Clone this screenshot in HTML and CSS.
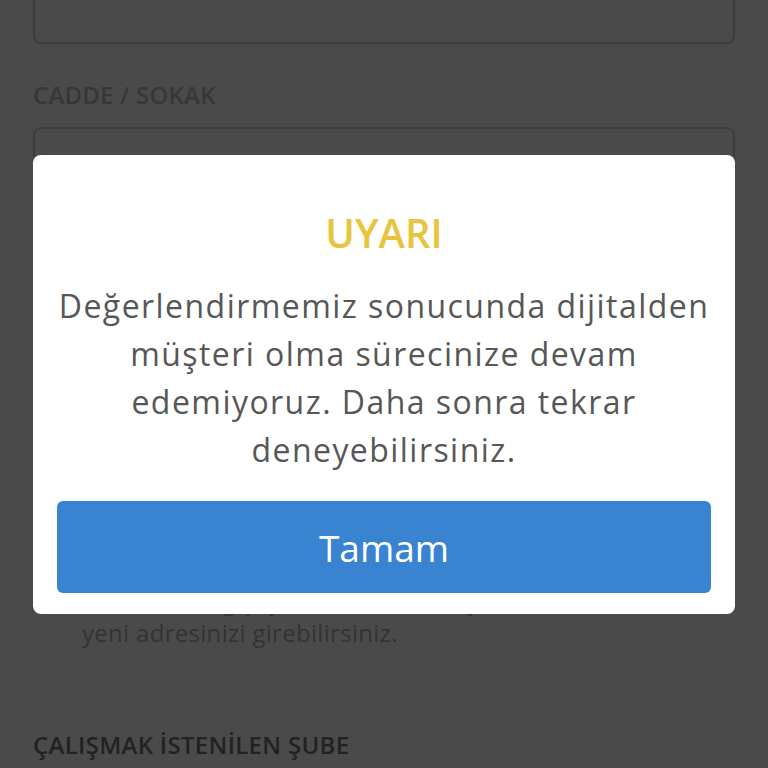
FILE: index.html
```html
<!DOCTYPE html>
<html lang="tr">
<head>
    <meta charset="UTF-8">
    <meta name="viewport" content="width=device-width, initial-scale=1.0">
    <title>Adres Bilgileri</title>
    <link rel="stylesheet" href="styles.css">
</head>
<body>
    <div class="page">
        <div class="field-input field-input--first"></div>

        <label class="field-label">CADDE / SOKAK</label>
        <div class="field-input field-input--tall"></div>

        <div class="check-row">
            <span class="check-box"></span>
            <p class="check-text">Adresiniz değiştiyse bu alana tıklayarak<br>yeni adresinizi girebilirsiniz.</p>
        </div>

        <label class="field-label field-label--strong">ÇALIŞMAK İSTENİLEN ŞUBE</label>
        <div class="field-input"></div>
    </div>

    <div class="overlay"></div>

    <div class="modal">
        <h2 class="modal-title">UYARI</h2>
        <p class="modal-text">Değerlendirmemiz sonucunda dijitalden müşteri olma sürecinize devam edemiyoruz. Daha sonra tekrar deneyebilirsiniz.</p>
        <button type="button" class="modal-button">Tamam</button>
    </div>
</body>
</html>
```

FILE: styles.css
```css
:root {
    --page-bg: #ffffff;
    --input-border: #d2d2d2;
    --label-color: #bcbcbc;
    --label-strong: #767676;
    --hint-color: #b0b0b0;

    --overlay-bg: rgba(0, 0, 0, 0.71);
    --modal-bg: #ffffff;
    --title-color: #e9c43f;
    --text-color: #575757;
    --button-bg: #3a83d0;
}

html, body {
    margin: 0;
    padding: 0;
    height: 100%;
    overflow: hidden;
}

body {
    font-family: "Open Sans", "Noto Sans", sans-serif;
    background-color: var(--page-bg);
}

/* --- Page behind the dialog --- */

.page {
    display: flex;
    flex-direction: column;
    padding: 0 33px;
}

.field-input {
    height: 80px;
    border: 2px solid var(--input-border);
    border-radius: 8px;
    box-sizing: border-box;
}

.field-input--first {
    margin-top: -36px;
}

.field-input--tall {
    height: 406px; /* multi-line address box */
}

.field-label {
    display: block;
    margin-top: 35px;
    margin-bottom: 16px;
    font-size: 24px;
    line-height: 32px;
    font-weight: 600;
    letter-spacing: 0.2px;
    color: var(--label-color);
}

.field-label--strong {
    margin-top: 80px;
    letter-spacing: 0.3px;
    color: var(--label-strong);
}

.check-row {
    display: flex;
    gap: 23px;
    margin-top: 52px;
}

.check-box {
    flex: none;
    width: 26px;
    height: 26px;
    border: 2px solid var(--input-border);
    border-radius: 4px;
    box-sizing: border-box;
}

.check-text {
    margin: 0;
    font-size: 24px;
    line-height: 32px;
    letter-spacing: 0.3px;
    color: var(--hint-color);
}

/* --- Overlay and dialog --- */

.overlay {
    position: fixed;
    top: 0;
    left: 0;
    width: 100%;
    height: 100%;
    background-color: var(--overlay-bg);
    z-index: 1000;
}

.modal {
    position: fixed;
    top: 155px;
    left: 33px;
    right: 33px;
    z-index: 1001;
    display: flex;
    flex-direction: column;
    padding: 52px 24px 21px;
    background: var(--modal-bg);
    border-radius: 8px;
    text-align: center;
}

.modal-title {
    margin: 0;
    font-size: 40px;
    line-height: 52px;
    font-weight: 600;
    color: var(--title-color);
}

.modal-text {
    margin: 23px 0 27px;
    font-size: 32px;
    line-height: 48px;
    letter-spacing: 1.45px;
    color: var(--text-color);
}

.modal-button {
    height: 92px;
    border: none;
    border-radius: 6px;
    background-color: var(--button-bg);
    color: #ffffff;
    font-family: inherit;
    font-size: 37px;
    cursor: pointer;
}
```
